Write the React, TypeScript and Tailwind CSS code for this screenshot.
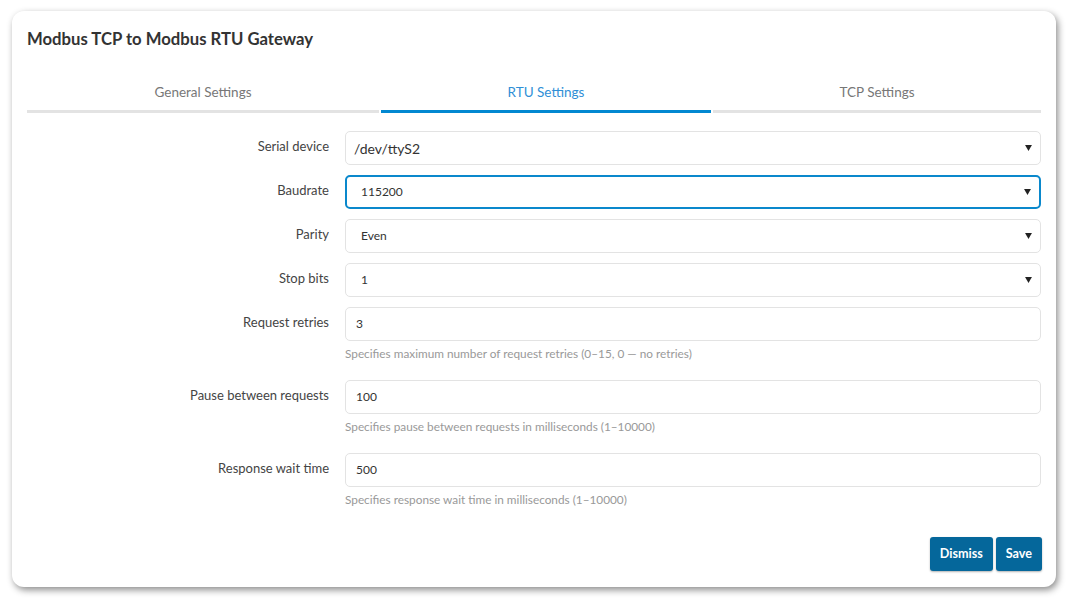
import React from "react";

const Arrow = () => (
  <svg width="7" height="6" viewBox="0 0 8 7" className="absolute right-[8px] top-1/2 -translate-y-1/2">
    <path d="M0 0 H8 L4 7 Z" fill="#222" />
  </svg>
);

function Row({ label, children, help, mb = "mb-[10px]" }: { label: string; children: React.ReactNode; help?: string; mb?: string }) {
  return (
    <div className={`flex ${help ? "mb-[19px]" : mb}`}>
      <div className="w-[302px] shrink-0 text-right text-[13px] text-[#444] pt-[6px] leading-[18px]">{label}</div>
      <div className="ml-[16px] flex-1">
        {children}
        {help && <div className="mt-[6px] text-[11.8px] leading-[14px] text-[#999]">{help}</div>}
      </div>
    </div>
  );
}

function Select({ value, focused, big }: { value: string; focused?: boolean; big?: boolean }) {
  return (
    <div
      className={`relative h-[34px] rounded-[5px] flex items-center ${
        focused ? "border-2 border-[#0a88cc] pl-[14px]" : "border border-[#e3e3e3] " + (big ? "pl-[8px]" : "pl-[15px]")
      } ${big ? "text-[14px]" : "text-[12px]"} text-[#333]`}
    >
      {value}
      <Arrow />
    </div>
  );
}

function Input({ value }: { value: string }) {
  return (
    <div className="h-[34px] rounded-[5px] border border-[#e3e3e3] flex items-center pl-[10px] text-[12px] text-[#333]">{value}</div>
  );
}

export default function App() {
  return (
    <div className="w-[1067px] h-[601px] bg-white pl-[12px] pt-[11px]" style={{ fontFamily: "Lato, 'Open Sans', sans-serif" }}>
      <div className="w-[1044px] h-[576px] bg-white rounded-[12px] shadow-[2px_3px_7px_rgba(0,0,0,0.45)] px-[15px] pt-[18px]">
        <h1 className="text-[16.7px] font-bold text-[#333] leading-[20px]">Modbus TCP to Modbus RTU Gateway</h1>
        <div className="flex gap-[2px] mt-[34px] mb-[18px]">
          <div className="w-[352px] border-b-[3px] border-[#e3e3e3] text-center text-[13.5px] text-[#777] leading-[18px] pb-[9px]">General Settings</div>
          <div className="w-[330px] border-b-[3px] border-[#0288d1] text-center text-[13.5px] text-[#2f8fd6] leading-[18px] pb-[9px]">RTU Settings</div>
          <div className="flex-1 border-b-[3px] border-[#e3e3e3] text-center text-[13.5px] text-[#777] leading-[18px] pb-[9px]">TCP Settings</div>
        </div>
        <Row label="Serial device"><Select value="/dev/ttyS2" big /></Row>
        <Row label="Baudrate"><Select value="115200" focused /></Row>
        <Row label="Parity"><Select value="Even" /></Row>
        <Row label="Stop bits"><Select value="1" /></Row>
        <Row label="Request retries" help="Specifies maximum number of request retries (0–15, 0 — no retries)"><Input value="3" /></Row>
        <Row label="Pause between requests" help="Specifies pause between requests in milliseconds (1–10000)"><Input value="100" /></Row>
        <Row label="Response wait time" help="Specifies response wait time in milliseconds (1–10000)"><Input value="500" /></Row>
        <div className="flex justify-end gap-[3px] mt-[30px] mr-[-1px]">
          <button className="h-[34px] px-[10px] rounded-[3px] bg-[#05679b] text-white text-[12.6px] font-bold shadow-[0_1px_2px_rgba(0,0,0,0.3)]">Dismiss</button>
          <button className="h-[34px] px-[10px] rounded-[3px] bg-[#05679b] text-white text-[12.6px] font-bold shadow-[0_1px_2px_rgba(0,0,0,0.3)]">Save</button>
        </div>
      </div>
    </div>
  );
}
